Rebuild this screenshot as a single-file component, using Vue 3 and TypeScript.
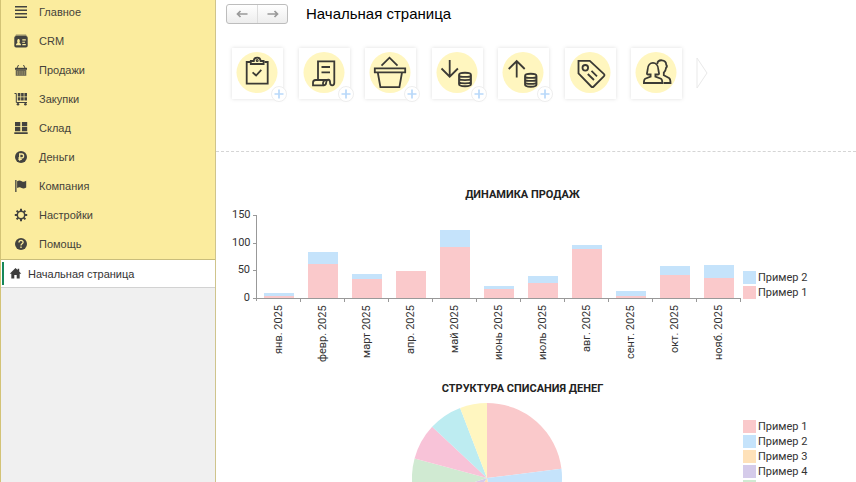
<script setup lang="ts">
interface MenuItem {
  id: string
  label: string
}

interface Month {
  label: string
  first: number
  second: number
}

interface Slice {
  label: string
  share: number
  color: string
}

const menu: MenuItem[] = [
  { id: 'main', label: 'Главное' },
  { id: 'crm', label: 'CRM' },
  { id: 'sales', label: 'Продажи' },
  { id: 'purchases', label: 'Закупки' },
  { id: 'stock', label: 'Склад' },
  { id: 'money', label: 'Деньги' },
  { id: 'company', label: 'Компания' },
  { id: 'settings', label: 'Настройки' },
  { id: 'help', label: 'Помощь' },
]

const tiles = [
  { id: 'task', title: 'Новая задача', add: true },
  { id: 'receipt', title: 'Новый чек', add: true },
  { id: 'basket', title: 'Новый заказ', add: true },
  { id: 'income', title: 'Поступление денег', add: true },
  { id: 'expense', title: 'Расход денег', add: true },
  { id: 'tag', title: 'Цены', add: false },
  { id: 'people', title: 'Контрагенты', add: false },
]

const axisMax = 150
const ticks = [150, 100, 50, 0]

const months: Month[] = [
  { label: 'янв. 2025', first: 4, second: 5 },
  { label: 'февр. 2025', first: 61, second: 22 },
  { label: 'март 2025', first: 34, second: 9 },
  { label: 'апр. 2025', first: 48, second: 1 },
  { label: 'май 2025', first: 93, second: 30 },
  { label: 'июнь 2025', first: 16, second: 6 },
  { label: 'июль 2025', first: 27, second: 12 },
  { label: 'авг. 2025', first: 88, second: 7 },
  { label: 'сент. 2025', first: 3, second: 9 },
  { label: 'окт. 2025', first: 41, second: 17 },
  { label: 'нояб. 2025', first: 37, second: 23 },
]

const slices: Slice[] = [
  { label: 'Пример 1', share: 83, color: '#fac9cb' },
  { label: 'Пример 2', share: 87, color: '#c5e3fb' },
  { label: 'Пример 3', share: 45, color: '#fee1b9' },
  { label: 'Пример 4', share: 37, color: '#d5cbea' },
  { label: '', share: 33, color: '#d0ead2' },
  { label: '', share: 28, color: '#f8c3d8' },
  { label: '', share: 26, color: '#bdecf1' },
  { label: '', share: 21, color: '#fff6c0' },
]

const radius = 75
const total = slices.reduce((sum, s) => sum + s.share, 0)

function point(angle: number): string {
  const x = radius + radius * Math.sin(angle)
  const y = radius - radius * Math.cos(angle)
  return `${x.toFixed(2)} ${y.toFixed(2)}`
}

let turned = 0
const sectors = slices.map((s) => {
  const from = (turned / total) * Math.PI * 2
  turned += s.share
  const to = (turned / total) * Math.PI * 2
  return {
    color: s.color,
    d: `M${radius} ${radius}L${point(from)}A${radius} ${radius} 0 0 1 ${point(to)}Z`,
  }
})

function percent(value: number): string {
  return `${(value / axisMax) * 100}%`
}
</script>

<template>
  <div class="app">
    <aside class="sidebar">
      <nav class="menu">
        <a v-for="item in menu" :key="item.id" class="menu-item" href="#">
          <svg class="menu-icon" viewBox="0 0 14 14" aria-hidden="true">
            <path v-if="item.id === 'main'" d="M1 1h12v1.6H1zM1 4.500h12v1.600H1zM1 8h12v1.600H1zM1 11.500h12v1.600H1z" />
            <g v-else-if="item.id === 'crm'">
              <path d="M2 0.500h10l1 2H1z" opacity="0.55" />
              <rect x="0.300" y="2" width="13.400" height="11.500" rx="1.800" />
              <path class="cut" d="M2 11.200c0-1.500.7-2 1.600-2.300C2.900 7.700 3 5 4.500 5s1.600 2.700.9 3.900c.9.300 1.600.8 1.600 2.300zM8.300 5.300h3.500v1.200H8.300zM8.300 7.700H11v1H8.300zM8.300 10h3.500v1.200H8.300z" />
            </g>
            <g v-else-if="item.id === 'sales'">
              <path d="M1 4.800h12v2H1z" />
              <path d="M1.700 7h10.600v5.800H1.700z" opacity="0.8" />
              <path class="line" d="M3 5l1.500-3M11 5L9.500 2" />
              <path class="scratch" d="M3.700 8v4M5.900 8v4M8.100 8v4M10.300 8v4" />
            </g>
            <g v-else-if="item.id === 'purchases'">
              <path class="line" d="M0.500 1.500h1.800v9H13" />
              <path d="M3.800 1h2.600v3.400H3.800zM7.100 1h2.600v3.400H7.100zM10.400 1H13v3.400h-2.600zM3.800 5.200h2.600v3.400H3.800zM7.100 5.200h2.600v3.400H7.100zM10.400 5.200H13v3.400h-2.600z" />
              <circle cx="4" cy="12.200" r="1.300" />
              <circle cx="11.400" cy="12.200" r="1.300" />
            </g>
            <path v-else-if="item.id === 'stock'" d="M1 1h5.300v4.200H1zM7.900 1h5.300v4.200H7.900zM1 5.900h5.300v4.400H1zM7.900 5.900h5.300v4.400H7.900zM.3 11.300h13.400V13H.3z" />
            <g v-else-if="item.id === 'money'">
              <circle cx="7" cy="7" r="6" />
              <path class="cut-line" d="M5.700 10.800V4h2a1.800 1.800 0 0 1 0 3.800H4.400M4.400 9.400h3.400" />
            </g>
            <g v-else-if="item.id === 'company'">
              <path d="M1.200 1h1.300v12H1.200zM3.100 2.200c2-1.100 3.200-.7 4.700.1 1.400.8 2.600.7 4.400-.5v6.600c-1.800 1.100-3.200 1.300-4.600.5-1.500-.8-2.700-.8-4.500.2z" />
            </g>
            <g v-else-if="item.id === 'settings'">
              <circle class="gear" cx="7" cy="7" r="3.700" />
              <path class="teeth" d="M7 .8v2.200M7 11v2.200M.8 7H3M11 7h2.200M2.600 2.600l1.600 1.600M9.800 9.800l1.600 1.600M11.400 2.600L9.800 4.200M4.200 9.800l-1.600 1.600" />
            </g>
            <g v-else>
              <circle cx="7" cy="7" r="6" />
              <path class="cut-line" d="M5 5.500C5 2.700 9.200 2.900 9.100 5.300 9.100 6.700 7 6.800 7 8.400M7 9.600v1.500" />
            </g>
          </svg>
          <span>{{ item.label }}</span>
        </a>
      </nav>
      <a class="tab" href="#">
        <svg class="home" viewBox="0 0 14 14" aria-hidden="true">
          <path d="M7 1L.8 7.200h1.700v5.300h3.200V8.600h2.600v3.900h3.200V7.200h1.700L11 4.800V2H9.300v1.200z" />
        </svg>
        <span>Начальная страница</span>
      </a>
    </aside>

    <main class="content">
      <header class="header">
        <div class="history">
          <button type="button" aria-label="Назад">
            <svg viewBox="0 0 12 8" aria-hidden="true"><path d="M11.500 4H1.500M4.500 1L1.500 4l3 3" /></svg>
          </button>
          <button type="button" aria-label="Вперёд">
            <svg viewBox="0 0 12 8" aria-hidden="true"><path d="M.5 4h10M7.500 1l3 3-3 3" /></svg>
          </button>
        </div>
        <h1>Начальная страница</h1>
      </header>

      <section class="actions">
        <div class="tiles">
          <button v-for="tile in tiles" :key="tile.id" class="tile" type="button" :aria-label="tile.title">
            <svg class="tile-icon" viewBox="0 0 51 51" aria-hidden="true">
              <circle class="disc" cx="25" cy="24.500" r="20.500" />
              <g v-if="tile.id === 'task'">
                <path d="M18 14h-3.300v21.700h21V14h-3.300" />
                <path d="M18.800 16v-3h3c.2-4.500 6.600-4.500 6.800 0h3v3z" />
                <circle cx="25.200" cy="12.600" r=".6" />
                <path d="M20.600 24.300l3.500 3.200 5.200-5.600" />
              </g>
              <g v-else-if="tile.id === 'receipt'">
                <path d="M19 32V13.300h16.300v21.500c0 3.400-4.200 3.400-4.200 0 0-3.800-3.600-4.200-3.900-.3-.1 2.400-.9 2.900-2.700 2.900H14v-2.600c0-2.100.9-2.800 2.700-2.800h11.500" />
                <path d="M22.500 19h8.500M22.500 24.300h8.500M25 37.300c-1.700-.3-1.300-4.900 1.500-5.400" />
              </g>
              <g v-else-if="tile.id === 'basket'">
                <path d="M9.800 20.300h30.400v4H9.800zM12.800 24.500l2.600 14.700h19l2.600-14.700M16.500 17.700l8-8 8 8" />
              </g>
              <g v-else-if="tile.id === 'income'">
                <path d="M17.700 12v16.500M9.500 20.500l8.200 8.200 8.200-8.200" />
                <path d="M27 27c0-3 12-3 12 0v9c0 3-12 3-12 0zM27 27c0 2.600 12 2.600 12 0M27 30c0 2.800 12 2.800 12 0M27 33.200c0 2.800 12 2.800 12 0" />
              </g>
              <g v-else-if="tile.id === 'expense'">
                <path d="M18.700 29.500V13M10.700 21l8-8 8 8" />
                <path d="M27 28c0-3 11.500-3 11.500 0v8.500c0 3-11.500 3-11.500 0zM27 28c0 2.600 11.500 2.600 11.500 0M27 31c0 2.600 11.500 2.600 11.500 0M27 34c0 2.600 11.500 2.600 11.500 0" />
              </g>
              <g v-else-if="tile.id === 'tag'">
                <path d="M13.500 12.800h11.300l14 13c.9.900.9 1.600 0 2.500L28.700 38.500c-.9.900-1.600.9-2.500 0L13.500 25.500z" />
                <circle cx="20.300" cy="19.800" r="2.800" />
                <path d="M26.500 22.800l5.500 5.500M22.800 26l6.200 6" />
              </g>
              <g v-else>
                <path d="M17 26.500c-2 0-.6-2-.4-4.800.3-9 10.400-9 10.800 0 .2 2.800 1.600 4.800-.4 4.800h-2.600v2.200l5.600 2c1.100.6 1.300 1.700 1.300 4.300H12.900c0-2.600.2-3.700 1.300-4.300l5.400-2v-2.200z" />
                <path d="M26.300 16c.3-5.200 8.800-4.900 8.900.6.700.8.800 2.400-.2 3.400-.2 2.400-1 3.600-2.200 4.700v2.600l5.200 2.700c1.300.8 1.500 2 1.500 5h-7" />
              </g>
            </svg>
            <svg v-if="tile.add" class="badge" viewBox="0 0 16 16" aria-hidden="true">
              <circle cx="8" cy="8" r="7.500" />
              <path d="M8 3.500v9M3.500 8h9" />
            </svg>
          </button>
        </div>
        <button class="more" type="button" aria-label="Ещё">
          <svg viewBox="0 0 12 32" aria-hidden="true"><path d="M1 1v30l10-15z" /></svg>
        </button>
      </section>

      <section class="chart bars-chart">
        <h2>ДИНАМИКА ПРОДАЖ</h2>
        <div class="chart-body">
          <div class="scale">
            <span v-for="tick in ticks" :key="tick">{{ tick }}</span>
          </div>
          <div class="plot">
            <div class="bars">
              <div class="marks"><i v-for="tick in ticks" :key="tick"></i></div>
              <div v-for="month in months" :key="month.label" class="column">
                <div class="bar second" :style="{ height: percent(month.second) }"></div>
                <div class="bar first" :style="{ height: percent(month.first) }"></div>
              </div>
            </div>
            <div class="months">
              <div v-for="month in months" :key="month.label" class="month">
                <span>{{ month.label }}</span>
              </div>
            </div>
          </div>
          <ul class="legend">
            <li><i class="swatch second"></i>Пример 2</li>
            <li><i class="swatch first"></i>Пример 1</li>
          </ul>
        </div>
      </section>

      <section class="chart pie-chart">
        <h2>СТРУКТУРА СПИСАНИЯ ДЕНЕГ</h2>
        <div class="chart-body">
          <div class="pie">
            <svg viewBox="0 0 150 150" role="img" aria-label="Структура списания денег">
              <path v-for="sector in sectors" :key="sector.color" :d="sector.d" :fill="sector.color" />
            </svg>
          </div>
          <ul class="legend">
            <li v-for="slice in slices" :key="slice.color">
              <i class="swatch" :style="{ background: slice.color }"></i>{{ slice.label }}
            </li>
          </ul>
        </div>
      </section>
    </main>
  </div>
</template>

<style>
body {
  overflow: hidden;
  background: #fff;
}
</style>

<style scoped>
.app {
  display: flex;
  height: 100vh;
  overflow: hidden;
  font-family: Roboto, 'Liberation Sans', sans-serif;
  font-size: 11px;
  color: #333;
}

a {
  color: inherit;
  text-decoration: none;
}

button {
  padding: 0;
  border: 0;
  background: none;
}

h1,
h2,
ul {
  margin: 0;
  padding: 0;
}

.sidebar {
  box-sizing: border-box;
  flex: none;
  width: 216px;
  border-right: 1px solid #cfc48c;
  border-left: 1px solid #d3c376;
  background: #f0f0f0;
  font-family: 'Liberation Sans', sans-serif;
}

.menu {
  margin-top: -3px;
  padding-bottom: 1px;
  border-bottom: 1px solid #c9bd7c;
  background: #fbec9e;
}

.menu-item {
  display: flex;
  align-items: center;
  gap: 11px;
  height: 29px;
  padding-left: 13px;
  color: #45433a;
}

.menu-icon {
  width: 14px;
  height: 14px;
  fill: #43433f;
}

.cut {
  fill: #fbec9e;
}

.line,
.scratch,
.cut-line,
.gear,
.teeth {
  fill: none;
  stroke: #43433f;
  stroke-width: 1;
}

.scratch {
  stroke: #b5ab78;
  stroke-width: 0.6;
}

.cut-line {
  stroke: #fbec9e;
  stroke-width: 1.3;
}

.gear {
  stroke-width: 1.5;
}

.teeth {
  stroke-width: 2;
}

.tab {
  display: flex;
  align-items: center;
  gap: 6px;
  height: 23px;
  padding: 2px 0 2px 8px;
  border-bottom: 1px solid #d2d2d2;
  background: linear-gradient(#16875a, #16875a) 1px 2px / 2px 23px no-repeat #fff;
}

.home {
  width: 13px;
  height: 13px;
  fill: #3d3d3d;
}

.content {
  flex: 1;
  min-width: 0;
}

.header {
  display: flex;
  align-items: center;
  gap: 18px;
  height: 27px;
  padding-left: 10px;
}

.history {
  display: flex;
  border: 1px solid #bdbdbd;
  border-radius: 3px;
  background: linear-gradient(#fff, #ededed);
}

.history button {
  display: flex;
  align-items: center;
  justify-content: center;
  width: 30px;
  height: 18px;
}

.history button + button {
  border-left: 1px solid #ddd;
}

.history svg {
  width: 12px;
  height: 8px;
  fill: none;
  stroke: #999;
  stroke-width: 1.7;
}

h1 {
  font: 15px 'Liberation Sans', sans-serif;
  color: #000;
}

.actions {
  display: flex;
  align-items: flex-start;
  gap: 14px;
  height: 103px;
  padding: 21px 16px 0;
  border-bottom: 1px dashed #d5d5d5;
}

.tiles {
  display: flex;
  flex: 0 1 450px;
  justify-content: space-between;
}

.tile {
  position: relative;
  width: 51px;
  height: 51px;
  background: #fff;
  box-shadow: 0 0 4px rgba(0, 0, 0, 0.13);
}

.tile-icon {
  display: block;
  fill: none;
  stroke: #3b3a35;
  stroke-width: 1.8;
}

.disc {
  fill: #fff6bf;
  stroke: none;
}

.badge {
  position: absolute;
  right: -4px;
  bottom: -3px;
  width: 16px;
  height: 16px;
  fill: none;
  stroke: #b9d9fa;
  stroke-width: 1.7;
}

.badge circle {
  fill: #fff;
  stroke: #eee;
  stroke-width: 1;
}

.more {
  display: flex;
  padding-top: 9px;
}

.more svg {
  width: 12px;
  height: 32px;
  fill: #fff;
  stroke: #e9e9e9;
}

.chart {
  padding: 0 43px 0 16px;
}

.bars-chart {
  padding-top: 35px;
}

.pie-chart {
  padding-top: 20px;
}

h2 {
  font-size: 11px;
  font-weight: 700;
  line-height: 16px;
  text-align: center;
  color: #222;
}

.chart-body {
  display: flex;
}

.bars-chart .chart-body {
  padding-top: 12px;
}

.scale {
  display: flex;
  flex: none;
  flex-direction: column;
  justify-content: space-between;
  width: 18px;
  height: 97px;
  margin: -7px 6px 0 0;
  line-height: 14px;
  text-align: right;
}

.plot {
  flex: 1;
}

.bars {
  position: relative;
  display: flex;
  height: 83px;
  border-bottom: 1px solid #999;
  border-left: 1px solid #999;
}

.marks {
  position: absolute;
  top: 0;
  bottom: -1px;
  left: -4px;
  display: flex;
  flex-direction: column;
  justify-content: space-between;
}

.marks i {
  width: 3px;
  height: 1px;
  background: #999;
}

.column {
  display: flex;
  flex: 1;
  flex-direction: column;
  align-items: center;
  justify-content: flex-end;
}

.bar {
  width: 67%;
}

.first {
  background: #fac9cb;
}

.second {
  background: #c5e3fb;
}

.months {
  display: flex;
  border-left: 1px solid #999;
  border-image: linear-gradient(#999 3px, transparent 3px) 1;
}

.month {
  display: flex;
  flex: 1;
  justify-content: center;
  height: 56px;
  padding-top: 6px;
  background: linear-gradient(#999, #999) right top / 1px 3px no-repeat;
}

.month span {
  display: flex;
  justify-content: flex-end;
  height: 56px;
  line-height: 14px;
  white-space: nowrap;
  writing-mode: vertical-rl;
  transform: rotate(180deg);
}

.legend {
  flex: none;
  width: 70px;
  margin-left: 2px;
  line-height: 15px;
  list-style: none;
}

.bars-chart .legend {
  padding-top: 55px;
}

.pie-chart .legend {
  padding-top: 22px;
}

.legend li {
  display: flex;
  align-items: center;
  gap: 2px;
  height: 15px;
  white-space: nowrap;
}

.swatch {
  width: 13px;
  height: 13px;
}

.pie {
  display: flex;
  flex: 1;
  justify-content: center;
  padding-top: 6px;
}

.pie svg {
  width: 150px;
  height: 150px;
}
</style>
